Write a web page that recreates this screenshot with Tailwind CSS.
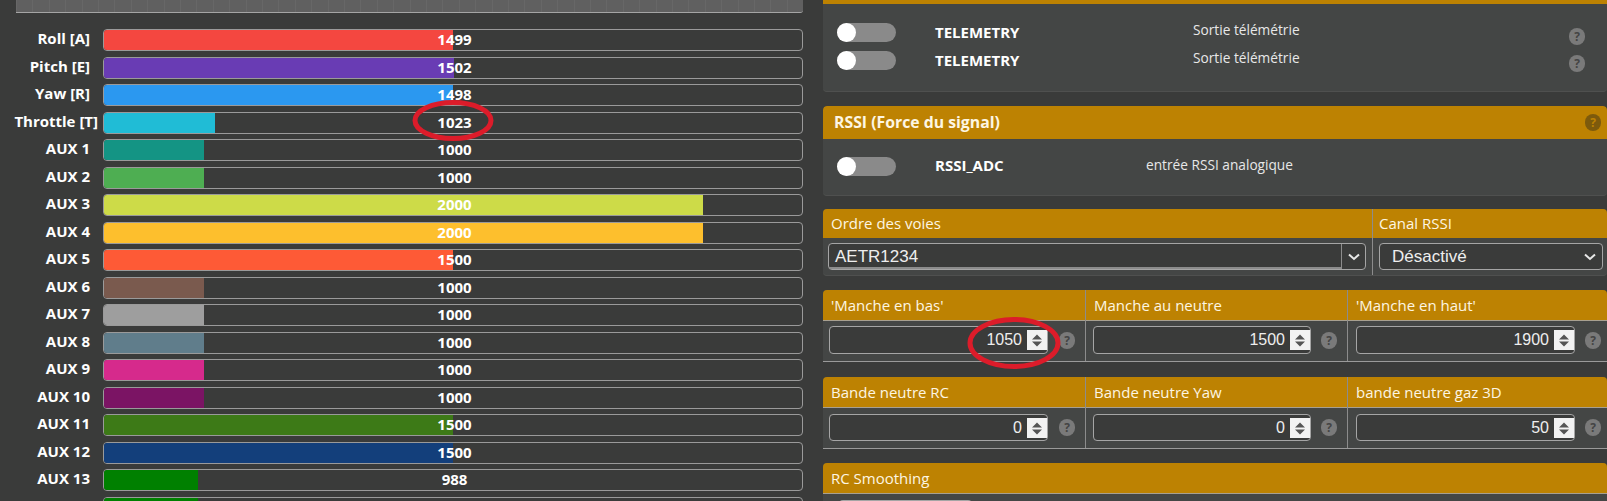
<!DOCTYPE html>
<html lang="en">
<head>
    <meta charset="UTF-8">
    <script src="https://cdn.jsdelivr.net/npm/@tailwindcss/browser@4"></script>
    <title>Receiver</title>
</head>
<body class="bg-[#3a3b3a] h-[501px] overflow-hidden font-['Open_Sans',sans-serif] text-white">
<div class="relative flex h-[501px] w-[1607px] overflow-hidden">

    <!-- channel bars -->
    <div class="w-[803px] shrink-0 mr-[20px]">
        <div class="ml-[16px] h-[13px] border-b border-[#a5a5a5] rounded-br-[3px] bg-[#606060] bg-[repeating-linear-gradient(90deg,#676767_0,#676767_1px,transparent_1px,transparent_16.4px)]"></div>
        <div class="pt-[16px] text-[15px] font-bold leading-[19px]">
            <div class="flex h-[27.5px]"><div class="w-[90px] shrink-0 text-right mr-[13px]">Roll [A]</div><div class="relative flex-1 h-[22px] border border-[#9a9a9a] rounded-[4px] overflow-hidden"><div class="h-full bg-[#f44740]" style="width:349px"></div><span class="absolute inset-0 pl-[3px] text-center leading-[18px]">1499</span></div></div>
            <div class="flex h-[27.5px]"><div class="w-[90px] shrink-0 text-right mr-[13px]">Pitch [E]</div><div class="relative flex-1 h-[22px] border border-[#9a9a9a] rounded-[4px] overflow-hidden"><div class="h-full bg-[#693cb4]" style="width:350px"></div><span class="absolute inset-0 pl-[3px] text-center leading-[18px]">1502</span></div></div>
            <div class="flex h-[27.5px]"><div class="w-[90px] shrink-0 text-right mr-[13px]">Yaw [R]</div><div class="relative flex-1 h-[22px] border border-[#9a9a9a] rounded-[4px] overflow-hidden"><div class="h-full bg-[#2b98f0]" style="width:349px"></div><span class="absolute inset-0 pl-[3px] text-center leading-[18px]">1498</span></div></div>
            <div class="flex h-[27.5px]"><div class="w-[90px] shrink-0 flex justify-end mr-[13px]"><span class="translate-x-[8px] whitespace-nowrap">Throttle [T]</span></div><div class="relative flex-1 h-[22px] border border-[#9a9a9a] rounded-[4px] overflow-hidden"><div class="h-full bg-[#20bcd6]" style="width:111px"></div><span class="absolute inset-0 pl-[3px] text-center leading-[18px]">1023</span></div></div>
            <div class="flex h-[27.5px]"><div class="w-[90px] shrink-0 text-right mr-[13px]">AUX 1</div><div class="relative flex-1 h-[22px] border border-[#9a9a9a] rounded-[4px] overflow-hidden"><div class="h-full bg-[#149484]" style="width:100px"></div><span class="absolute inset-0 pl-[3px] text-center leading-[18px]">1000</span></div></div>
            <div class="flex h-[27.5px]"><div class="w-[90px] shrink-0 text-right mr-[13px]">AUX 2</div><div class="relative flex-1 h-[22px] border border-[#9a9a9a] rounded-[4px] overflow-hidden"><div class="h-full bg-[#4eae52]" style="width:100px"></div><span class="absolute inset-0 pl-[3px] text-center leading-[18px]">1000</span></div></div>
            <div class="flex h-[27.5px]"><div class="w-[90px] shrink-0 text-right mr-[13px]">AUX 3</div><div class="relative flex-1 h-[22px] border border-[#9a9a9a] rounded-[4px] overflow-hidden"><div class="h-full bg-[#cddb48]" style="width:599px"></div><span class="absolute inset-0 pl-[3px] text-center leading-[18px]">2000</span></div></div>
            <div class="flex h-[27.5px]"><div class="w-[90px] shrink-0 text-right mr-[13px]">AUX 4</div><div class="relative flex-1 h-[22px] border border-[#9a9a9a] rounded-[4px] overflow-hidden"><div class="h-full bg-[#fdbf2d]" style="width:599px"></div><span class="absolute inset-0 pl-[3px] text-center leading-[18px]">2000</span></div></div>
            <div class="flex h-[27.5px]"><div class="w-[90px] shrink-0 text-right mr-[13px]">AUX 5</div><div class="relative flex-1 h-[22px] border border-[#9a9a9a] rounded-[4px] overflow-hidden"><div class="h-full bg-[#fe5a36]" style="width:349px"></div><span class="absolute inset-0 pl-[3px] text-center leading-[18px]">1500</span></div></div>
            <div class="flex h-[27.5px]"><div class="w-[90px] shrink-0 text-right mr-[13px]">AUX 6</div><div class="relative flex-1 h-[22px] border border-[#9a9a9a] rounded-[4px] overflow-hidden"><div class="h-full bg-[#7a5a4e]" style="width:100px"></div><span class="absolute inset-0 pl-[3px] text-center leading-[18px]">1000</span></div></div>
            <div class="flex h-[27.5px]"><div class="w-[90px] shrink-0 text-right mr-[13px]">AUX 7</div><div class="relative flex-1 h-[22px] border border-[#9a9a9a] rounded-[4px] overflow-hidden"><div class="h-full bg-[#9e9e9e]" style="width:100px"></div><span class="absolute inset-0 pl-[3px] text-center leading-[18px]">1000</span></div></div>
            <div class="flex h-[27.5px]"><div class="w-[90px] shrink-0 text-right mr-[13px]">AUX 8</div><div class="relative flex-1 h-[22px] border border-[#9a9a9a] rounded-[4px] overflow-hidden"><div class="h-full bg-[#607d8b]" style="width:100px"></div><span class="absolute inset-0 pl-[3px] text-center leading-[18px]">1000</span></div></div>
            <div class="flex h-[27.5px]"><div class="w-[90px] shrink-0 text-right mr-[13px]">AUX 9</div><div class="relative flex-1 h-[22px] border border-[#9a9a9a] rounded-[4px] overflow-hidden"><div class="h-full bg-[#d62a8c]" style="width:100px"></div><span class="absolute inset-0 pl-[3px] text-center leading-[18px]">1000</span></div></div>
            <div class="flex h-[27.5px]"><div class="w-[90px] shrink-0 text-right mr-[13px]">AUX 10</div><div class="relative flex-1 h-[22px] border border-[#9a9a9a] rounded-[4px] overflow-hidden"><div class="h-full bg-[#7b1464]" style="width:100px"></div><span class="absolute inset-0 pl-[3px] text-center leading-[18px]">1000</span></div></div>
            <div class="flex h-[27.5px]"><div class="w-[90px] shrink-0 text-right mr-[13px]">AUX 11</div><div class="relative flex-1 h-[22px] border border-[#9a9a9a] rounded-[4px] overflow-hidden"><div class="h-full bg-[#3d7a17]" style="width:349px"></div><span class="absolute inset-0 pl-[3px] text-center leading-[18px]">1500</span></div></div>
            <div class="flex h-[27.5px]"><div class="w-[90px] shrink-0 text-right mr-[13px]">AUX 12</div><div class="relative flex-1 h-[22px] border border-[#9a9a9a] rounded-[4px] overflow-hidden"><div class="h-full bg-[#133f7b]" style="width:349px"></div><span class="absolute inset-0 pl-[3px] text-center leading-[18px]">1500</span></div></div>
            <div class="flex h-[27.5px]"><div class="w-[90px] shrink-0 text-right mr-[13px]">AUX 13</div><div class="relative flex-1 h-[22px] border border-[#9a9a9a] rounded-[4px] overflow-hidden"><div class="h-full bg-[#008000]" style="width:94px"></div><span class="absolute inset-0 pl-[3px] text-center leading-[18px]">988</span></div></div>
            <div class="flex h-[27.5px]"><div class="w-[90px] shrink-0 mr-[13px]"></div><div class="relative flex-1 h-[22px] border border-[#9a9a9a] rounded-[4px] overflow-hidden"><div class="h-full bg-[#008000]" style="width:94px"></div></div></div>
        </div>
    </div>

    <!-- settings -->
    <div class="w-[784px] shrink-0">
        <!-- serial rx -->
        <div class="h-[4px] bg-[#bd8202]"></div>
        <div class="h-[88px] bg-[#444645] border-b border-[#4f504f] rounded-b-[4px] pt-[19px] pl-[14px]">
            <div class="flex h-[28px]">
                <div class="w-[59px] h-[19px] rounded-full bg-[#8a8a8a]"><div class="w-[19px] h-[19px] rounded-full bg-white"></div></div>
                <div class="w-[258px] ml-[39px] font-bold leading-[19px] text-[15px]">TELEMETRY</div>
                <div class="w-[376px] text-[13.7px] leading-[14px] text-[#e8e8e8]">Sortie télémétrie</div>
                <div class="mt-[5px] w-[16px] h-[17px] rounded-full bg-[#7a7a7a] text-[#444] text-[12px] font-bold leading-[17px] text-center">?</div>
            </div>
            <div class="flex h-[28px]">
                <div class="w-[59px] h-[19px] rounded-full bg-[#8a8a8a]"><div class="w-[19px] h-[19px] rounded-full bg-white"></div></div>
                <div class="w-[258px] ml-[39px] font-bold leading-[19px] text-[15px]">TELEMETRY</div>
                <div class="w-[376px] text-[13.7px] leading-[14px] text-[#e8e8e8]">Sortie télémétrie</div>
                <div class="mt-[4px] w-[16px] h-[17px] rounded-full bg-[#7a7a7a] text-[#444] text-[12px] font-bold leading-[17px] text-center">?</div>
            </div>
        </div>

        <!-- rssi -->
        <div class="mt-[14px] h-[90px] bg-[#444645] border-b border-[#4f504f] rounded-[4px] overflow-hidden">
            <div class="flex items-center justify-between h-[33px] bg-[#bd8202] pl-[11px] pr-[6px] rounded-t-[4px]">
                <span class="text-[15.8px] font-bold text-[#fdf6e3]">RSSI (Force du signal)</span>
                <span class="w-[16px] h-[17px] rounded-full bg-[#7d5a0c] text-[#bd8202] text-[12px] font-bold leading-[17px] text-center">?</span>
            </div>
            <div class="flex pt-[18px] pl-[14px]">
                <div class="w-[59px] h-[19px] rounded-full bg-[#8a8a8a]"><div class="w-[19px] h-[19px] rounded-full bg-white"></div></div>
                <div class="w-[211px] ml-[39px] font-bold leading-[17px] text-[15px]">RSSI_ADC</div>
                <div class="text-[13.7px] leading-[15px] text-[#e8e8e8]">entrée RSSI analogique</div>
            </div>
        </div>

        <!-- channel map -->
        <div class="mt-[13px] grid grid-cols-[550px_1fr] h-[67px] bg-[#444645] border-b border-[#4f504f] rounded-[4px] overflow-hidden">
            <div class="border-r border-[#8c8c8c]">
                <div class="h-[29px] bg-[#bd8202] pl-[8px] text-[15px] leading-[29px] text-[#fdf6e3]">Ordre des voies</div>
                <div class="flex h-[27px] mt-[5px] ml-[5px] mr-[6px] border border-[#a5a5a5] rounded-[4px] bg-[#3a3b3a] font-['Liberation_Sans',sans-serif] text-[17px] leading-[25px] text-[#eee]">
                    <span class="flex-1 pl-[6px] border-b-2 border-r border-[#8c8c8c]">AETR1234</span>
                    <span class="flex items-center justify-center w-[23px]"><svg width="12" height="8" viewBox="0 0 12 8" fill="none" stroke="#e8e8e8" stroke-width="2"><path d="M1 1.5 6 6l5-4.5"/></svg></span>
                </div>
            </div>
            <div>
                <div class="h-[29px] bg-[#bd8202] pl-[6px] text-[15px] leading-[29px] text-[#fdf6e3]">Canal RSSI</div>
                <div class="flex items-center justify-between h-[27px] mt-[5px] ml-[6px] mr-[4px] pl-[12px] pr-[6px] border border-[#a5a5a5] rounded-[4px] bg-[#3a3b3a] font-['Liberation_Sans',sans-serif] text-[17px] leading-[25px] text-[#eee]">
                    <span>Désactivé</span>
                    <svg width="12" height="8" viewBox="0 0 12 8" fill="none" stroke="#e8e8e8" stroke-width="2"><path d="M1 1.5 6 6l5-4.5"/></svg>
                </div>
            </div>
        </div>

        <!-- stick values -->
        <div class="mt-[14px] grid grid-cols-[263px_262px_1fr] h-[72px] bg-[#444645] border-b border-[#9a9a9a] rounded-t-[4px] overflow-hidden">
            <div class="border-r border-[#8c8c8c]">
                <div class="h-[31px] bg-[#bd8202] border-b border-[#a8a090] pl-[8px] text-[15px] leading-[30px] text-[#fdf6e3]">'Manche en bas'</div>
                <div class="flex items-center pl-[6px] pt-[5px]">
                    <div class="flex items-center justify-end w-[219px] h-[28px] border border-[#a5a5a5] rounded-[4px] bg-[#3a3b3a] font-['Liberation_Sans',sans-serif] text-[16px] text-[#eee]">
                        <span class="pr-[5px]">1050</span>
                        <svg class="bg-[#f2f2f2]" width="20" height="20" viewBox="0 0 20 20" fill="#555"><path d="M10 4.5 15 9.5H5zM10 16.5 5 11.5h10z"/></svg>
                    </div>
                    <span class="ml-[11px] w-[16px] h-[17px] rounded-full bg-[#7a7a7a] text-[#444] text-[12px] font-bold leading-[17px] text-center">?</span>
                </div>
            </div>
            <div class="border-r border-[#8c8c8c]">
                <div class="h-[31px] bg-[#bd8202] border-b border-[#a8a090] pl-[8px] text-[15px] leading-[30px] text-[#fdf6e3]">Manche au neutre</div>
                <div class="flex items-center pl-[7px] pt-[5px]">
                    <div class="flex items-center justify-end w-[218px] h-[28px] border border-[#a5a5a5] rounded-[4px] bg-[#3a3b3a] font-['Liberation_Sans',sans-serif] text-[16px] text-[#eee]">
                        <span class="pr-[5px]">1500</span>
                        <svg class="bg-[#f2f2f2]" width="20" height="20" viewBox="0 0 20 20" fill="#555"><path d="M10 4.5 15 9.5H5zM10 16.5 5 11.5h10z"/></svg>
                    </div>
                    <span class="ml-[10px] w-[16px] h-[17px] rounded-full bg-[#7a7a7a] text-[#444] text-[12px] font-bold leading-[17px] text-center">?</span>
                </div>
            </div>
            <div>
                <div class="h-[31px] bg-[#bd8202] border-b border-[#a8a090] pl-[8px] text-[15px] leading-[30px] text-[#fdf6e3]">'Manche en haut'</div>
                <div class="flex items-center pl-[8px] pt-[5px]">
                    <div class="flex items-center justify-end w-[219px] h-[28px] border border-[#a5a5a5] rounded-[4px] bg-[#3a3b3a] font-['Liberation_Sans',sans-serif] text-[16px] text-[#eee]">
                        <span class="pr-[5px]">1900</span>
                        <svg class="bg-[#f2f2f2]" width="20" height="20" viewBox="0 0 20 20" fill="#555"><path d="M10 4.5 15 9.5H5zM10 16.5 5 11.5h10z"/></svg>
                    </div>
                    <span class="ml-[10px] w-[16px] h-[17px] rounded-full bg-[#7a7a7a] text-[#444] text-[12px] font-bold leading-[17px] text-center">?</span>
                </div>
            </div>
        </div>

        <!-- deadband -->
        <div class="mt-[15px] grid grid-cols-[263px_262px_1fr] h-[72px] bg-[#444645] border-b border-[#9a9a9a] rounded-t-[4px] overflow-hidden">
            <div class="border-r border-[#8c8c8c]">
                <div class="h-[31px] bg-[#bd8202] border-b border-[#a8a090] pl-[8px] text-[15px] leading-[30px] text-[#fdf6e3]">Bande neutre RC</div>
                <div class="flex items-center pl-[6px] pt-[6px]">
                    <div class="flex items-center justify-end w-[219px] h-[27px] border border-[#a5a5a5] rounded-[4px] bg-[#3a3b3a] font-['Liberation_Sans',sans-serif] text-[16px] text-[#eee]">
                        <span class="pr-[5px]">0</span>
                        <svg class="bg-[#f2f2f2]" width="20" height="20" viewBox="0 0 20 20" fill="#555"><path d="M10 4.5 15 9.5H5zM10 16.5 5 11.5h10z"/></svg>
                    </div>
                    <span class="ml-[11px] w-[16px] h-[17px] rounded-full bg-[#7a7a7a] text-[#444] text-[12px] font-bold leading-[17px] text-center">?</span>
                </div>
            </div>
            <div class="border-r border-[#8c8c8c]">
                <div class="h-[31px] bg-[#bd8202] border-b border-[#a8a090] pl-[8px] text-[15px] leading-[30px] text-[#fdf6e3]">Bande neutre Yaw</div>
                <div class="flex items-center pl-[7px] pt-[6px]">
                    <div class="flex items-center justify-end w-[218px] h-[27px] border border-[#a5a5a5] rounded-[4px] bg-[#3a3b3a] font-['Liberation_Sans',sans-serif] text-[16px] text-[#eee]">
                        <span class="pr-[5px]">0</span>
                        <svg class="bg-[#f2f2f2]" width="20" height="20" viewBox="0 0 20 20" fill="#555"><path d="M10 4.5 15 9.5H5zM10 16.5 5 11.5h10z"/></svg>
                    </div>
                    <span class="ml-[10px] w-[16px] h-[17px] rounded-full bg-[#7a7a7a] text-[#444] text-[12px] font-bold leading-[17px] text-center">?</span>
                </div>
            </div>
            <div>
                <div class="h-[31px] bg-[#bd8202] border-b border-[#a8a090] pl-[8px] text-[15px] leading-[30px] text-[#fdf6e3]">bande neutre gaz 3D</div>
                <div class="flex items-center pl-[8px] pt-[6px]">
                    <div class="flex items-center justify-end w-[219px] h-[27px] border border-[#a5a5a5] rounded-[4px] bg-[#3a3b3a] font-['Liberation_Sans',sans-serif] text-[16px] text-[#eee]">
                        <span class="pr-[5px]">50</span>
                        <svg class="bg-[#f2f2f2]" width="20" height="20" viewBox="0 0 20 20" fill="#555"><path d="M10 4.5 15 9.5H5zM10 16.5 5 11.5h10z"/></svg>
                    </div>
                    <span class="ml-[10px] w-[16px] h-[17px] rounded-full bg-[#7a7a7a] text-[#444] text-[12px] font-bold leading-[17px] text-center">?</span>
                </div>
            </div>
        </div>

        <!-- rc smoothing -->
        <div class="mt-[14px] bg-[#444645] rounded-t-[4px] overflow-hidden h-[60px]">
            <div class="h-[31px] bg-[#bd8202] border-b border-[#a8a090] pl-[8px] text-[15px] leading-[30px] text-[#fdf6e3]">RC Smoothing</div>
            <div class="mt-[6px] ml-[16px] w-[133px] h-[20px] border-t border-[#a5a5a5] rounded-t-[4px]"></div>
        </div>
    </div>

    <!-- hand drawn annotations on the screenshot -->
    <svg class="absolute inset-0 pointer-events-none" width="1607" height="501" fill="none" stroke="#dc1c2a" stroke-width="5">
        <ellipse cx="453" cy="120.5" rx="38" ry="18"/>
        <ellipse cx="1014" cy="343" rx="44" ry="23.5"/>
    </svg>
</div>
</body>
</html>
